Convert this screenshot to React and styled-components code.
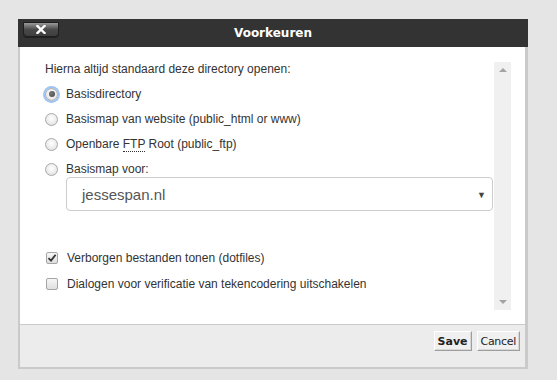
import React from "react";
import styled, { createGlobalStyle } from "styled-components";

const Global = createGlobalStyle`
  html, body { margin: 0; padding: 0; background: #e5e5e5; }
  body { font-family: "Liberation Sans", Arial, sans-serif; }
`;

const Page = styled.div`
  width: 557px;
  height: 380px;
  padding: 19px 0 0 18px;
  box-sizing: border-box;
`;

const Dialog = styled.div`
  width: 510px;
  display: flex;
  flex-direction: column;
`;

const Header = styled.div`
  height: 28px;
  background: #333333;
  position: relative;
  display: flex;
  align-items: center;
  justify-content: center;
`;

const Title = styled.div`
  color: #fff;
  font-family: "DejaVu Sans", Verdana, sans-serif;
  font-weight: bold;
  font-size: 12px;
`;

const CloseButton = styled.button`
  position: absolute;
  left: 5px;
  top: 3px;
  width: 36px;
  height: 15px;
  padding: 0;
  border: 1px solid #1e1e1e;
  border-radius: 1px 1px 4px 4px;
  background: linear-gradient(#9a9a9a 0%, #6a6a6a 30%, #4a4a4a 50%, #3e3e3e 100%);
  box-shadow: 0 1px 0 #222;
  display: flex;
  align-items: center;
  justify-content: center;
`;

const Body = styled.div`
  height: 277px;
  background: #fff;
  border-left: 2px solid #cacaca;
  border-right: 3px solid #cacaca;
  display: flex;
  box-sizing: border-box;
`;

const Content = styled.div`
  flex: 1;
  padding: 15px 0 0 25px;
  display: flex;
  flex-direction: column;
  color: #333;
  font-size: 12px;
`;

const Heading = styled.div`
  line-height: 14px;
  height: 14px;
`;

const OptionList = styled.div`
  margin-top: 9px;
  display: flex;
  flex-direction: column;
  gap: 7px;
`;

const Row = styled.label`
  height: 18px;
  display: flex;
  align-items: center;
  gap: 9px;
  line-height: 14px;
`;

const Radio = styled.span`
  width: 13px;
  height: 13px;
  box-sizing: border-box;
  border-radius: 50%;
  border: 1px solid #a9a9a9;
  background: radial-gradient(circle at 50% 40%, #ffffff 0%, #ececec 55%, #d6d6d6 100%);
  display: flex;
  align-items: center;
  justify-content: center;
  flex: none;
  margin-right: -1px;
  ${(p) =>
    p.$checked &&
    `
    box-shadow: 0 0 0 2px #9cc4f4;
    &::after {
      content: "";
      width: 6px;
      height: 6px;
      border-radius: 50%;
      background: radial-gradient(circle at 40% 40%, #777, #444);
    }
  `}
`;

const Checkbox = styled.span`
  width: 12px;
  height: 12px;
  box-sizing: border-box;
  border-radius: 2px;
  border: 1px solid #a6a6a6;
  background: linear-gradient(#f6f6f6, #dedede);
  flex: none;
  margin-left: 1px;
  display: flex;
  align-items: center;
  justify-content: center;
`;

const Abbr = styled.span`
  border-bottom: 1px dotted #333;
  line-height: 12px;
`;

const SelectBox = styled.div`
  margin: -1px 0 0 21px;
  width: 427px;
  height: 34px;
  box-sizing: border-box;
  border: 1px solid #cccccc;
  border-radius: 4px;
  display: flex;
  align-items: center;
  justify-content: space-between;
  padding: 0 6px 0 15px;
  color: #555;
  font-size: 15px;
`;

const Caret = styled.span`
  font-size: 9px;
  color: #444;
  margin-top: 1px;
`;

const CheckList = styled.div`
  margin-top: 38px;
  display: flex;
  flex-direction: column;
  gap: 8px;
`;

const Scrollbar = styled.div`
  width: 17px;
  margin: 15px 14px 14px 0;
  background: #f0f0f0;
  display: flex;
  flex-direction: column;
  justify-content: space-between;
  align-items: center;
  padding: 6px 0;
  box-sizing: border-box;
`;

const Arrow = styled.span`
  width: 0;
  height: 0;
  border-left: 4px solid transparent;
  border-right: 4px solid transparent;
  ${(p) =>
    p.$down
      ? `border-top: 4px solid #a3a3a3;`
      : `border-bottom: 4px solid #a3a3a3;`}
`;

const Footer = styled.div`
  height: 36px;
  background: #ececec;
  border-top: 1px solid #cacaca;
  border-left: 2px solid #cacaca;
  border-right: 3px solid #cacaca;
  border-bottom: 2px solid #cacaca;
  display: flex;
  justify-content: flex-end;
  align-items: flex-start;
  gap: 5px;
  padding: 6px 5px 0 0;
`;

const Button = styled.button`
  height: 20px;
  padding: 0 3px;
  background: #f0f0f0;
  border: 1px solid;
  border-color: #ffffff #9e9e9e #9e9e9e #ffffff;
  box-shadow: inset -1px -1px 0 #d8d8d8;
  font-family: "DejaVu Sans", Verdana, sans-serif;
  font-size: 11px;
  font-weight: ${(p) => (p.$primary ? "bold" : "normal")};
  color: #222;
  letter-spacing: ${(p) => (p.$primary ? "0" : "-0.3px")};
`;

export default function App() {
  return (
    <Page>
      <Global />
      <Dialog>
        <Header>
          <CloseButton aria-label="close">
            <svg width="10" height="9" viewBox="0 0 10 9">
              <path d="M1.5 1 L8.5 8 M8.5 1 L1.5 8" stroke="#fff" strokeWidth="2.4" strokeLinecap="square" />
            </svg>
          </CloseButton>
          <Title>Voorkeuren</Title>
        </Header>
        <Body>
          <Content>
            <Heading>Hierna altijd standaard deze directory openen:</Heading>
            <OptionList>
              <Row>
                <Radio $checked />
                Basisdirectory
              </Row>
              <Row>
                <Radio />
                Basismap van website (public_html or www)
              </Row>
              <Row>
                <Radio />
                <span>
                  Openbare <Abbr>FTP</Abbr> Root (public_ftp)
                </span>
              </Row>
              <Row>
                <Radio />
                Basismap voor:
              </Row>
            </OptionList>
            <SelectBox>
              <span>jessespan.nl</span>
              <Caret>▼</Caret>
            </SelectBox>
            <CheckList>
              <Row>
                <Checkbox>
                  <svg width="10" height="10" viewBox="0 0 10 10">
                    <path d="M1.5 5.2 L4 7.6 L8.6 1.8" fill="none" stroke="#333" strokeWidth="1.8" />
                  </svg>
                </Checkbox>
                Verborgen bestanden tonen (dotfiles)
              </Row>
              <Row>
                <Checkbox />
                Dialogen voor verificatie van tekencodering uitschakelen
              </Row>
            </CheckList>
          </Content>
          <Scrollbar>
            <Arrow />
            <Arrow $down />
          </Scrollbar>
        </Body>
        <Footer>
          <Button $primary>Save</Button>
          <Button>Cancel</Button>
        </Footer>
      </Dialog>
    </Page>
  );
}
